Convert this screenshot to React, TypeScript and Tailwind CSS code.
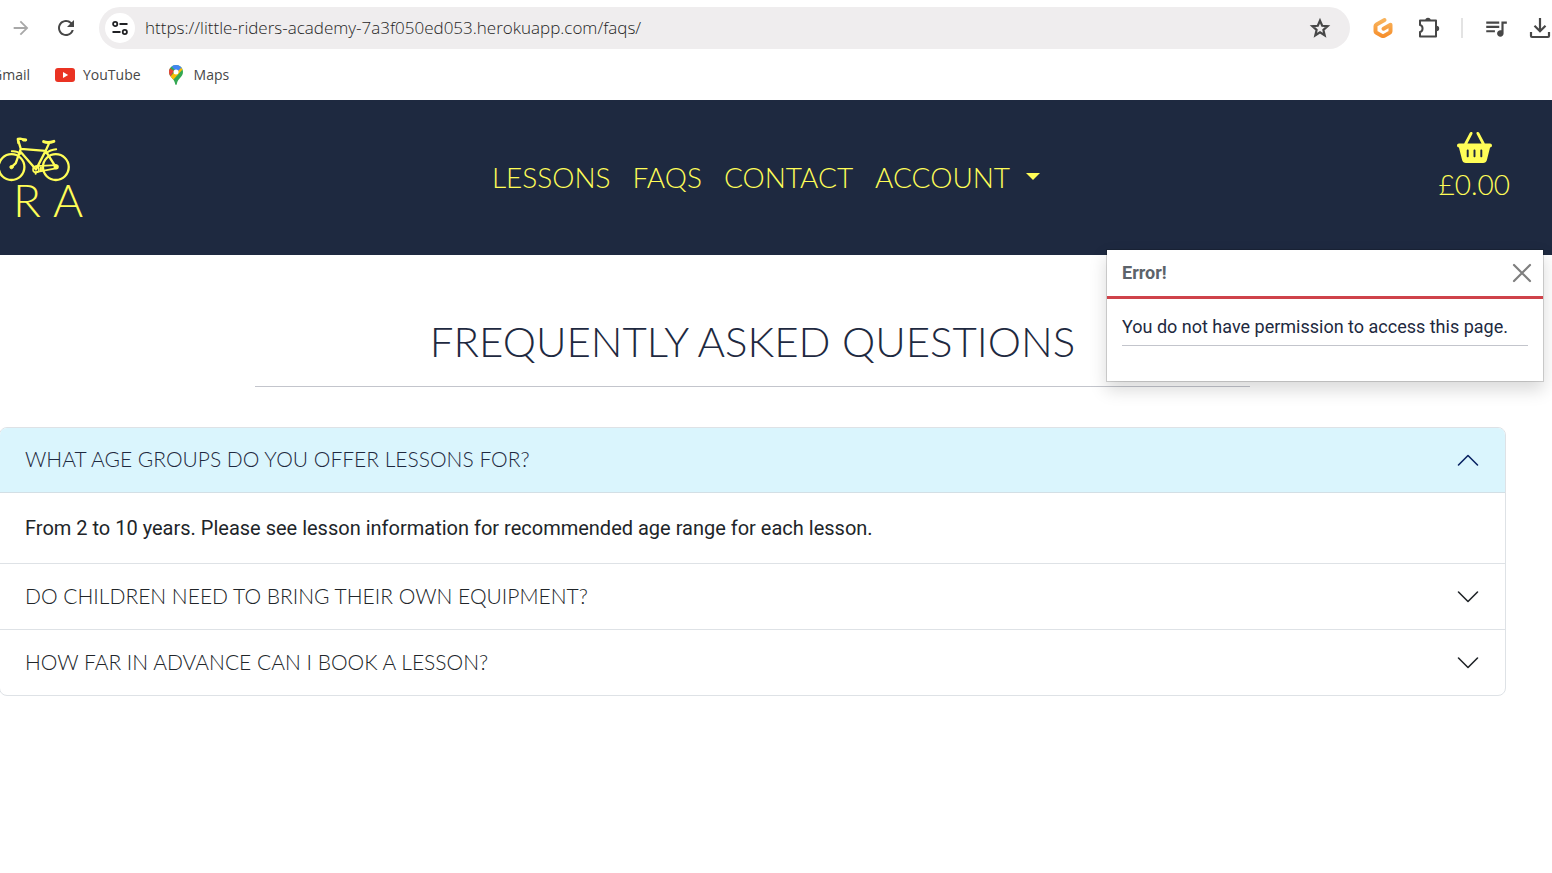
import { useState } from "react";
import type { ReactNode } from "react";
import { FaBasketShopping } from "react-icons/fa6";
import { MdArrowForward, MdQueueMusic, MdRefresh } from "react-icons/md";

const display = "font-['Lato',sans-serif] font-light uppercase";

function SiteInfoIcon() {
  return (
    <svg viewBox="0 0 16 16" className="size-4" fill="none" stroke="#202124" strokeWidth="1.8">
      <circle cx="3.2" cy="4" r="2.1" />
      <path d="M7.5 4H15.5M0.5 12H8.5" />
      <circle cx="12.8" cy="12" r="2.1" />
    </svg>
  );
}

function StarIcon() {
  return (
    <svg viewBox="0 0 24 24" className="size-6" fill="none" stroke="#474747" strokeWidth="2.2">
      <path d="M12 4.6L14.2 9.8L19.6 10.2L15.4 13.9L16.7 19.3L12 16.4L7.3 19.3L8.6 13.9L4.4 10.2L9.8 9.8Z" />
    </svg>
  );
}

function ExtensionIcon() {
  return (
    <svg viewBox="0 0 24 24" className="size-6" fill="none" stroke="#474747" strokeWidth="2" strokeLinejoin="round">
      <path d="M3 4.5H19V20.5H3V16C6.4 15.4 6.4 9.6 3 9Z" />
      <path d="M8.3 4.5a2.7 2.7 0 0 1 5.4 0ZM19.5 9.8a2.7 2.7 0 0 1 0 5.4Z" fill="#474747" stroke="none" />
    </svg>
  );
}

function DownloadIcon() {
  return (
    <svg viewBox="0 0 22 22" className="size-[22px]" fill="none" stroke="#474747" strokeWidth="2.2">
      <path d="M11 1V14M5.5 8.8L11 14.3L16.5 8.8M2 15V19Q2 20 3 20H19Q20 20 20 19V15" />
    </svg>
  );
}

function GitpodIcon() {
  return (
    <svg viewBox="0 0 20 22" className="h-[22px] w-5" fill="none" strokeWidth="4" strokeLinecap="round" strokeLinejoin="round">
      <defs>
        <linearGradient id="orange" x1="0" y1="0" x2="0" y2="1">
          <stop offset="0" stopColor="#f8b35c" />
          <stop offset="1" stopColor="#f6902e" />
        </linearGradient>
      </defs>
      <path d="M11.5 3L3.5 7.4C2.8 7.8 2.5 8.2 2.5 9V14.2C2.5 15 2.8 15.4 3.4 15.7L9.2 18.9C9.8 19.2 10.3 19.2 10.9 18.9L16.6 15.7C17.2 15.4 17.5 15 17.5 14.2V7.8L10.5 11.7" stroke="url(#orange)" />
    </svg>
  );
}

function YouTubeIcon() {
  return (
    <svg viewBox="0 0 20 14" className="h-3.5 w-5">
      <rect width="20" height="14" rx="3" fill="#ea3323" />
      <path d="M8 4V10L13.2 7Z" fill="#fff" />
    </svg>
  );
}

function MapsIcon() {
  return (
    <svg viewBox="0 0 14 20" className="h-5 w-3.5">
      <defs>
        <clipPath id="pin">
          <path d="M7 0C3.1 0 0 3.1 0 7C0 12 5.2 13 6.2 19C6.4 20.2 7.6 20.2 7.8 19C8.8 13 14 12 14 7C14 3.1 10.9 0 7 0Z" />
        </clipPath>
      </defs>
      <g clipPath="url(#pin)">
        <path d="M0 0H14V20H0Z" fill="#34a853" />
        <path d="M0 2.5L5 6L1 12H0Z" fill="#ea4335" />
        <path d="M1 12L11 1L14 4L4 15Z" fill="#fbbc04" />
        <path d="M2 0H14V4L12 3L8 7L3 2Z" fill="#4285f4" />
      </g>
      <circle cx="7" cy="7" r="2.5" fill="#fff" />
    </svg>
  );
}

function BicycleIcon() {
  return (
    <svg viewBox="-8 48 222 136" className="h-[45px] w-[74px]" fill="none" stroke="#fffd57" strokeLinecap="round" strokeLinejoin="round" aria-hidden="true">
      <g strokeWidth="7">
        <circle cx="35" cy="139" r="39" />
        <circle cx="169" cy="139" r="39" />
        <path d="M35 139L48 127L63 84L56 60M63 84L138 90L109 146L63 93M138 90L169 139M148 68L138 90" />
      </g>
      <path d="M56 66L54 54L61 53L77 57" strokeWidth="7" />
      <path d="M71 57H78" strokeWidth="9" />
      <path d="M132 62C142 66 152 65 163 61" strokeWidth="9" />
      <path d="M36 91C46 90 54 92 61 99M140 97C150 88 158 86 170 85" strokeWidth="6" />
      <path d="M109 136L169 133M109 154L169 143" strokeWidth="5" />
      <circle cx="109" cy="146" r="9" strokeWidth="5" />
      <path d="M108 156V159M124 140V150" strokeWidth="6" />
      <circle cx="35" cy="139" r="5" fill="#fffd57" strokeWidth="3" />
      <circle cx="170" cy="138" r="6" fill="#fffd57" strokeWidth="4" />
    </svg>
  );
}

function Chevron({ open }: { open: boolean }) {
  return (
    <svg viewBox="0 0 24 24" className={open ? "size-6 rotate-180 text-[#0a2463]" : "size-6 text-[#212529]"} fill="none" stroke="currentColor" strokeWidth="1.6" strokeLinecap="round" strokeLinejoin="round">
      <path d="M2.5 7L12 16.5L21.5 7" />
    </svg>
  );
}

function ToolButton({ label, children }: { label: string; children: ReactNode }) {
  return (
    <button type="button" aria-label={label} className="flex shrink-0 items-center justify-center text-[#474747]">
      {children}
    </button>
  );
}

function BrowserBar() {
  return (
    <div className="bg-white">
      <div className="flex h-14 items-center pl-2.5">
        <button type="button" aria-label="Forward" className="text-[#a8a8a8]">
          <MdArrowForward size={22} />
        </button>
        <button type="button" aria-label="Reload" className="ml-[22px] text-[#474747]">
          <MdRefresh size={24} />
        </button>
        <div className="ml-[21px] flex h-[42px] min-w-0 flex-1 items-center rounded-full bg-[#efedee] pr-[18px] pl-1.5">
          <button type="button" aria-label="Site information" className="flex size-[30px] shrink-0 items-center justify-center rounded-full bg-white">
            <SiteInfoIcon />
          </button>
          <input
            type="text"
            aria-label="Address"
            defaultValue="https://little-riders-academy-7a3f050ed053.herokuapp.com/faqs/"
            className="ml-2.5 min-w-0 flex-1 bg-transparent font-['Open_Sans',sans-serif] text-[17px] font-light text-[#1f1f1f] outline-none"
          />
          <ToolButton label="Bookmark this page"><StarIcon /></ToolButton>
        </div>
        <div className="ml-[23px] flex shrink-0 items-center">
          <ToolButton label="Gitpod"><GitpodIcon /></ToolButton>
          <div className="ml-6"><ToolButton label="Extensions"><ExtensionIcon /></ToolButton></div>
          <div className="ml-5 h-5 w-0.5 bg-[#e3e3e3]" />
          <div className="ml-5"><ToolButton label="Media controls"><MdQueueMusic size={26} /></ToolButton></div>
          <div className="ml-5 pr-px"><ToolButton label="Downloads"><DownloadIcon /></ToolButton></div>
        </div>
      </div>
      <div className="flex h-11 items-center pb-1.5 font-['Open_Sans',sans-serif] text-sm text-[#474747]">
        <a href="#gmail" className="-ml-2">Gmail</a>
        <a href="#youtube" className="ml-[25px] flex items-center gap-2"><YouTubeIcon />YouTube</a>
        <a href="#maps" className="ml-7 flex items-center gap-[11px]"><MapsIcon />Maps</a>
      </div>
    </div>
  );
}

function SiteHeader() {
  return (
    <header className="grid h-[155px] grid-cols-[1fr_auto_1fr] items-center bg-[#1e2940] text-[#fffd57]">
      <a href="#home" aria-label="Little Riders Academy" className="-ml-[3px] w-fit">
        <BicycleIcon />
        <span className={`${display} ml-4 flex h-9 items-center gap-3 text-[46px] leading-9`}>
          <span>R</span>
          <span>A</span>
        </span>
      </a>
      <nav className={`${display} mr-5 flex items-center gap-[22px] pb-0.5 text-[28px]`}>
        <a href="#lessons">Lessons</a>
        <a href="#faqs">FAQs</a>
        <a href="#contact">Contact</a>
        <button type="button" className="flex items-center gap-4 uppercase">
          Account
          <svg viewBox="0 0 14 7" className="h-[7px] w-3.5" fill="currentColor"><path d="M0 0H14L7 7Z" /></svg>
        </button>
      </nav>
      <a href="#basket" className={`${display} mr-[42px] mb-[26px] flex flex-col items-center justify-self-end text-[28px] leading-[30px]`}>
        <FaBasketShopping size={35} />
        <span className="mt-1">£0.00</span>
      </a>
    </header>
  );
}

function ErrorToast({ onClose }: { onClose: () => void }) {
  return (
    <div role="alert" className="absolute -top-1.5 right-2 w-[438px] border border-black/15 bg-white bg-clip-padding font-['Roboto',sans-serif] text-lg shadow-[0_8px_16px_rgba(0,0,0,0.15)]">
      <div className="flex h-[49px] items-center justify-between border-b-3 border-[#cf424a] pr-[11px] pl-[15px] text-[#5c636a]">
        <strong className="font-bold">Error!</strong>
        <button type="button" aria-label="Close" onClick={onClose}>
          <svg viewBox="0 0 20 20" className="size-5" fill="none" stroke="#7f7f7f" strokeWidth="2.2" strokeLinecap="round">
            <path d="M2 2L18 18M18 2L2 18" />
          </svg>
        </button>
      </div>
      <div className="px-[15px] pt-[15px] pb-[35px] text-[#212940]">
        <p className="border-b border-[#c3c5cc] pb-[5px] leading-[26px]">You do not have permission to access this page.</p>
      </div>
    </div>
  );
}

const faqs = [
  {
    question: "What age groups do you offer lessons for?",
    answer: "From 2 to 10 years. Please see lesson information for recommended age range for each lesson.",
  },
  {
    question: "Do children need to bring their own equipment?",
    answer: "Please bring a helmet and a bike.",
  },
  {
    question: "How far in advance can I book a lesson?",
    answer: "Please see the lessons page.",
  },
];

function Accordion() {
  const [open, setOpen] = useState<number | null>(0);
  return (
    <div className="mt-10 divide-y divide-[#dee2e6] overflow-hidden rounded-lg border border-[#dee2e6]">
      {faqs.map((faq, i) => (
        <section key={faq.question}>
          <h2>
            <button
              type="button"
              aria-expanded={open === i}
              onClick={() => setOpen(open === i ? null : i)}
              className={`${display} flex h-[65px] w-full items-center justify-between px-[25px] text-left text-[21px] ${open === i ? "border-b border-[#d3dfe5] bg-[#daf5fd] text-[#1e2940]" : "text-[#212529]"}`}
            >
              <span className="pb-0.5">{faq.question}</span>
              <Chevron open={open === i} />
            </button>
          </h2>
          {open === i && (
            <p className="px-[25px] py-5 font-['Roboto',sans-serif] text-xl leading-[30px] text-[#212529]">{faq.answer}</p>
          )}
        </section>
      ))}
    </div>
  );
}

export default function App() {
  const [toast, setToast] = useState(true);
  return (
    <div className="min-h-screen overflow-x-hidden bg-white">
      <BrowserBar />
      <SiteHeader />
      <main className="relative">
        <div className="mr-[46px] -ml-px pt-[61px]">
          <h1 className={`${display} text-center text-[42px] leading-[50px] text-[#1e2940]`}>Frequently Asked Questions</h1>
          <hr className="mx-auto mt-5 w-[66%] border-[#c3c5cc]" />
          <Accordion />
        </div>
        {toast && <ErrorToast onClose={() => setToast(false)} />}
      </main>
    </div>
  );
}
